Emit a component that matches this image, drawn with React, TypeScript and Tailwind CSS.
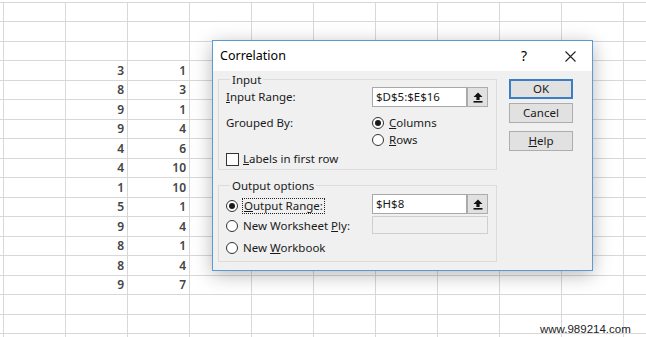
import React from "react";

const colB = [3, 8, 9, 9, 4, 4, 1, 5, 9, 8, 8, 9];
const colC = [1, 3, 1, 4, 6, 10, 10, 1, 4, 1, 4, 7];

const Radio = ({ checked }: { checked?: boolean }) => (
  <span className="flex h-[12px] w-[12px] shrink-0 items-center justify-center rounded-full border border-[#333] bg-white">
    {checked ? <span className="h-[6px] w-[6px] rounded-full bg-[#1a1a1a]" /> : null}
  </span>
);

const RefButton = () => (
  <div className="flex h-full w-[21px] items-center justify-center border border-[#adadad] bg-[#e1e1e1]">
    <svg width="10" height="11" viewBox="0 0 10 11">
      <path d="M5 0.5 L9.5 5 H6.6 V8 H3.4 V5 H0.5 Z" fill="#111" />
      <rect x="0.5" y="9" width="9" height="1.6" fill="#111" />
    </svg>
  </div>
);

const Grid = () => {
  const rows = Array.from({ length: 18 }, (_, i) => i);
  const cols = Array.from({ length: 11 }, (_, i) => i);
  return (
    <div className="pt-[1.5px]">
      {rows.map((r) => {
        const d = r - 3;
        const hasData = d >= 0 && d < colB.length;
        return (
          <div key={r} className="flex h-[19.5px] border-t border-[#d8d8d8]">
            <div className="w-[3px] shrink-0" />
            {cols.map((c) => (
              <div
                key={c}
                className="flex w-[62px] shrink-0 items-end justify-end border-l border-[#d8d8d8] pr-[3px] pb-[1px] text-[12px] leading-[16px] font-semibold text-[#444]"
              >
                {hasData && c === 1 ? colB[d] : null}
                {hasData && c === 2 ? colC[d] : null}
              </div>
            ))}
          </div>
        );
      })}
    </div>
  );
};

const Dialog = () => (
  <div className="absolute top-[40px] left-[212px] w-[381px] border border-[#5a9bd6] bg-[#f0f0f0] text-[11.5px] leading-[16px] text-[#1a1a1a] shadow-[0_4px_18px_rgba(0,0,0,0.28)]">
    <div className="flex h-[30px] items-center bg-white pl-[7px] text-[12.5px] text-black">
      <span>Correlation</span>
      <span className="ml-auto mr-[38px] text-[14px]">?</span>
      <svg className="mr-[16px]" width="11" height="11" viewBox="0 0 11 11">
        <path d="M0.5 0.5 L10.5 10.5 M10.5 0.5 L0.5 10.5" stroke="#222" strokeWidth="1.1" />
      </svg>
    </div>
    <div className="flex gap-[12px] pr-[19px] pb-[8px] pl-[5px]">
      <div className="w-[279px]">
        <fieldset className="border border-[#dcdcdc] pr-[8px] pb-[2px] pl-[7px]">
          <legend className="ml-[4px] px-[2px] pt-[2px] leading-[14px]">Input</legend>
          <div className="flex h-[20px] items-center">
            <span className="w-[146px]">
              <u>I</u>nput Range:
            </span>
            <div className="flex h-full w-[95px] items-center border border-[#a8a8a8] bg-white pl-[3px]">
              $D$5:$E$16
            </div>
            <RefButton />
          </div>
          <div className="mt-[8px] flex h-[16px] items-center">
            <span className="w-[146px]">Grouped By:</span>
            <Radio checked />
            <span className="ml-[5px]">
              <u>C</u>olumns
            </span>
          </div>
          <div className="mt-[1px] flex h-[16px] items-center">
            <span className="w-[146px]" />
            <Radio />
            <span className="ml-[5px]">
              <u>R</u>ows
            </span>
          </div>
          <div className="mt-[3px] flex h-[16px] items-center">
            <span className="h-[13px] w-[13px] border border-[#333] bg-white" />
            <span className="ml-[4px]">
              <u>L</u>abels in first row
            </span>
          </div>
        </fieldset>
        <fieldset className="mt-[7px] border border-[#dcdcdc] pr-[8px] pb-[5px] pl-[7px]">
          <legend className="ml-[4px] px-[2px] pt-[2px] leading-[14px]">Output options</legend>
          <div className="mt-[1px] flex h-[20px] items-end">
            <div className="flex w-[146px] items-center">
              <Radio checked />
              <span className="ml-[4px] border border-dotted border-[#222] px-[1px] leading-[14px]">
                <u>O</u>utput Range:
              </span>
            </div>
            <div className="flex h-full items-stretch">
              <div className="flex w-[95px] items-center border border-[#a8a8a8] bg-white pl-[3px]">$H$8</div>
              <RefButton />
            </div>
          </div>
          <div className="mt-[2px] flex h-[18px] items-end">
            <div className="flex w-[146px] items-center">
              <Radio />
              <span className="ml-[5px]">
                New Worksheet <u>P</u>ly:
              </span>
            </div>
            <div className="h-full w-[116px] border border-[#cfcfcf] bg-[#f0f0f0]" />
          </div>
          <div className="mt-[6px] flex h-[16px] items-center">
            <Radio />
            <span className="ml-[5px]">
              New <u>W</u>orkbook
            </span>
          </div>
        </fieldset>
      </div>
      <div className="flex w-[64px] flex-col pt-[8px]">
        <button className="h-[20px] border-2 border-[#3a7fc4] bg-[#e1e1e1] text-center leading-[14px]">OK</button>
        <button className="mt-[4px] h-[20px] border border-[#adadad] bg-[#e1e1e1] text-center">Cancel</button>
        <button className="mt-[8px] h-[20px] border border-[#adadad] bg-[#e1e1e1] text-center">
          <u>H</u>elp
        </button>
      </div>
    </div>
  </div>
);

export default function App() {
  return (
    <div
      className="relative h-[337px] w-[646px] overflow-hidden bg-white"
      style={{ fontFamily: '"Noto Sans", "Open Sans", sans-serif' }}
    >
      <Grid />
      <Dialog />
      <div
        className="absolute top-[321px] left-[540px] text-[11.5px] leading-[16px] text-[#222]"
        style={{ fontFamily: '"Liberation Sans", Arial, sans-serif' }}
      >
        www.989214.com
      </div>
    </div>
  );
}
